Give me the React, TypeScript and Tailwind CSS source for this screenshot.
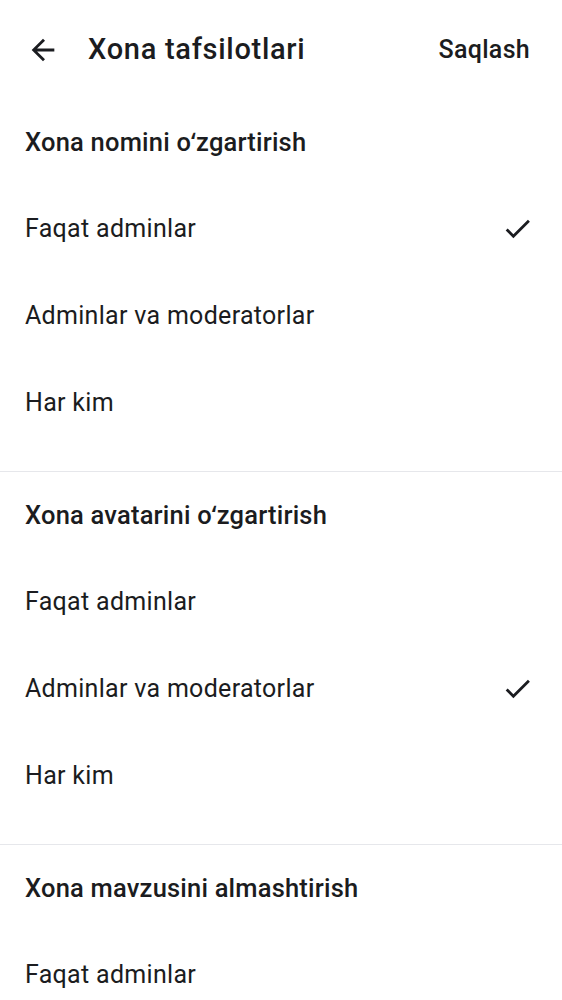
import React from "react";

const sections = [
  { title: "Xona nomini oʻzgartirish", selected: 0 },
  { title: "Xona avatarini oʻzgartirish", selected: 1 },
  { title: "Xona mavzusini almashtirish", selected: -1 },
];
const options = ["Faqat adminlar", "Adminlar va moderatorlar", "Har kim"];

function Check() {
  return (
    <svg width="33" height="33" viewBox="0 0 24 24" fill="#1b1c20">
      <path d="M9 16.17L4.83 12l-1.42 1.41L9 19 21 7l-1.41-1.41z" />
    </svg>
  );
}

export default function App() {
  return (
    <div className="w-[562px] h-[1000px] overflow-hidden bg-white text-[#1b1c20]" style={{ fontFamily: "Roboto, 'Noto Sans', sans-serif" }}>
      <div className="h-[99px] flex items-center pl-[26px] pr-[32px]">
        <svg width="34" height="34" viewBox="0 0 24 24" fill="#1b1c20">
          <path d="M20 11H7.83l5.59-5.59L12 4l-8 8 8 8 1.41-1.41L7.83 13H20v-2z" />
        </svg>
        <div className="ml-[28px] text-[29px] font-medium tracking-[0.7px] flex-1">Xona tafsilotlari</div>
        <div className="text-[25px] font-medium tracking-[0.3px]">Saqlash</div>
      </div>
      {sections.map((s, i) => (
        <div key={i} className={i > 0 ? "border-t border-[#e6e7eb]" : ""}>
          <div className="h-[86px] flex items-center px-[25px] text-[25.5px] font-medium tracking-[0.2px]">{s.title}</div>
          {options.map((o, j) => (
            <div key={j} className="h-[87px] flex items-center justify-between pl-[25px] pr-[28px] text-[25px] tracking-[0.3px]">
              <span>{o}</span>
              {s.selected === j && <Check />}
            </div>
          ))}
          <div className="h-[25px]" />
        </div>
      ))}
    </div>
  );
}
